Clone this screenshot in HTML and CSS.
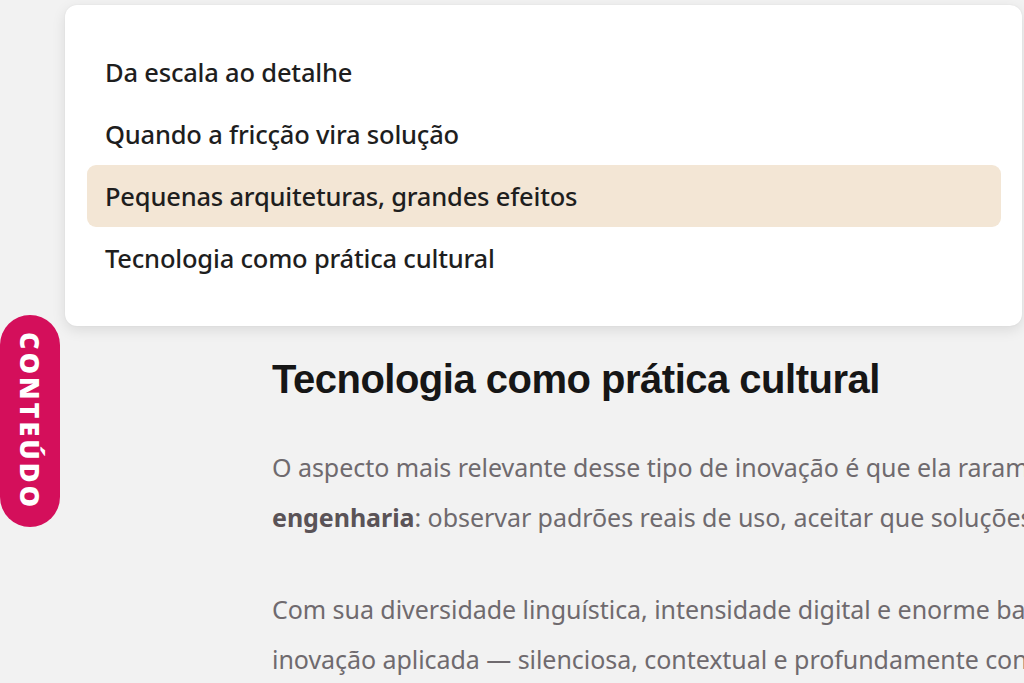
FILE: index.html
```html
<!DOCTYPE html>
<html lang="pt">
<head>
<meta charset="utf-8">
<title>Conteúdo</title>
<link rel="stylesheet" href="styles.css">
</head>
<body>
<nav class="toc">
  <ul class="toc-list">
    <li class="toc-item">Da escala ao detalhe</li>
    <li class="toc-item">Quando a fricção vira solução</li>
    <li class="toc-item is-active">Pequenas arquiteturas, grandes efeitos</li>
    <li class="toc-item">Tecnologia como prática cultural</li>
  </ul>
</nav>
<button class="toc-tab">CONTEÚDO</button>
<main class="article">
  <h2 class="article-title">Tecnologia como prática cultural</h2>
  <p class="article-text">O aspecto mais relevante desse tipo de inovação é que ela raramente nasce apenas da<br><strong>engenharia</strong>: observar padrões reais de uso, aceitar que soluções imperfeitas funcionam.</p>
  <p class="article-text">Com sua diversidade linguística, intensidade digital e enorme base de usuários, o país é<br>inovação aplicada — silenciosa, contextual e profundamente conectada ao cotidiano.</p>
</main>
</body>
</html>
```

FILE: styles.css
```css
html, body {
  margin: 0;
  padding: 0;
}
body {
  background: #f2f2f2;
  width: 1024px;
  height: 683px;
  overflow: hidden;
  position: relative;
  font-family: "Noto Sans", "Open Sans", sans-serif;
}
.toc {
  position: absolute;
  left: 65px;
  top: 5px;
  width: 957px;
  height: 321px;
  box-sizing: border-box;
  background: #ffffff;
  border-radius: 12px;
  box-shadow: 0 4px 14px rgba(0, 0, 0, 0.10), 0 0 2px rgba(0, 0, 0, 0.06);
  padding: 36px 21px 0 22px;
  z-index: 2;
}
.toc-list {
  list-style: none;
  margin: 0;
  padding: 0;
  display: flex;
  flex-direction: column;
}
.toc-item {
  height: 62px;
  display: flex;
  align-items: center;
  padding: 0 18px;
  border-radius: 9px;
  font-size: 25.5px;
  font-weight: 500;
  color: #1e1e1e;
  letter-spacing: -0.2px;
}
.toc-item.is-active {
  background: #f3e6d5;
}
.toc-tab {
  position: absolute;
  left: 0;
  top: 315px;
  width: 60px;
  height: 212px;
  border: none;
  padding: 0;
  border-radius: 30px;
  background: #d40f5b;
  color: #ffffff;
  writing-mode: vertical-rl;
  display: flex;
  align-items: center;
  justify-content: center;
  font-family: "Open Sans", "Noto Sans", sans-serif;
  font-weight: 800;
  font-size: 27px;
  letter-spacing: 3px;
  z-index: 3;
}
.article {
  padding: 346px 0 0 272px;
  width: 752px;
  overflow: hidden;
}
.article-title {
  margin: 0 0 30px;
  font-family: "Liberation Sans", Arial, sans-serif;
  font-weight: 700;
  font-size: 40px;
  line-height: 66px;
  color: #161616;
  letter-spacing: -0.5px;
  white-space: nowrap;
}
.article-text {
  margin: 0 0 42px;
  font-size: 25px;
  line-height: 50px;
  color: #6f6a6e;
  white-space: nowrap;
  letter-spacing: -0.05px;
}
.article-text strong {
  color: #5a5357;
  font-weight: 700;
}
```
